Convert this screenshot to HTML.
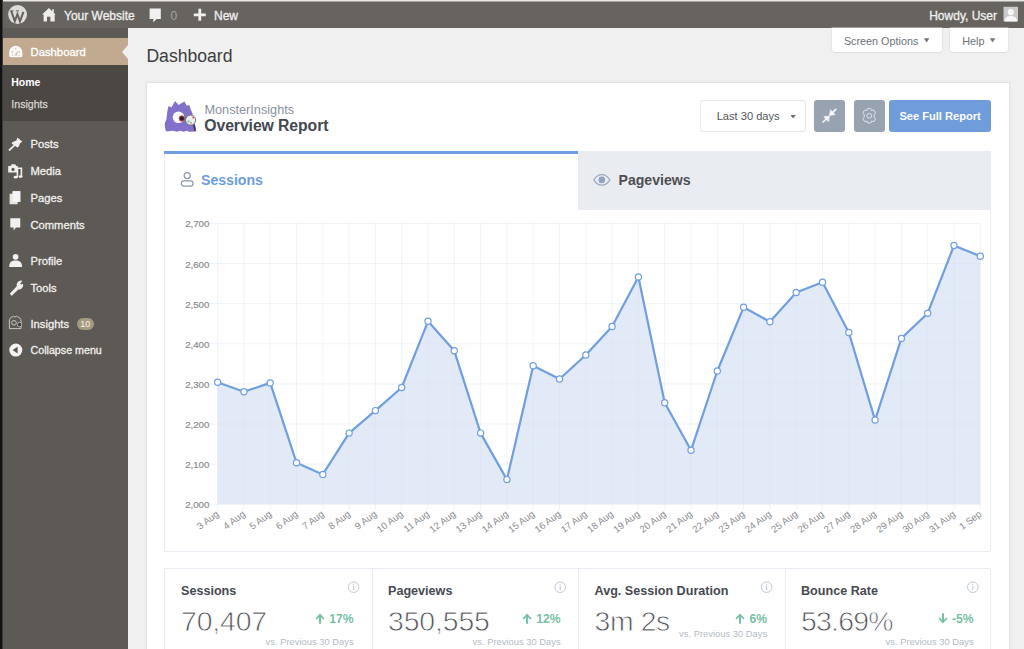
<!DOCTYPE html>
<html><head><meta charset="utf-8"><style>
html,body{margin:0;padding:0;width:1024px;height:649px;overflow:hidden;background:#f0f0f0;}
body{position:relative;font-family:"Liberation Sans", sans-serif;}
.r{position:absolute;}
.t{position:absolute;line-height:1;white-space:nowrap;}
svg{position:absolute;left:0;top:0;}
svg.ar{position:static;vertical-align:-1px;margin-right:4px;}
</style></head><body>
<div class="r" style="left:0px;top:0px;width:1024px;height:649px;background:#f0f0f0;"></div>
<div class="r" style="left:0px;top:0px;width:1024px;height:1px;background:#e9e7e5;"></div>
<div class="r" style="left:0px;top:1px;width:1024px;height:1px;background:#a9a5a1;"></div>
<div class="r" style="left:0px;top:2px;width:1024px;height:26px;background:#67635e;"></div>
<div class="r" style="left:3px;top:28px;width:125px;height:621px;background:#5d5954;"></div>
<div class="r" style="left:0px;top:0px;width:2px;height:649px;background:#121212;"></div>
<div class="r" style="left:2px;top:0px;width:1px;height:649px;background:#3c3a38;"></div>
<div class="r" style="left:3px;top:38px;width:125px;height:27px;background:#c2aa91;"></div>
<div class="r" style="left:3px;top:65px;width:125px;height:56px;background:#4b4743;"></div>
<div class="r" style="left:122px;top:44.6px;width:0;height:0;border-top:7px solid transparent;border-bottom:7px solid transparent;border-right:6px solid #f0f0f0;"></div>
<div class="t" style="left:64.00px;top:10.14px;font-size:12px;color:#f0f0f0;-webkit-text-stroke:0.3px #f0f0f0;">Your Website</div>
<div class="t" style="left:170.50px;top:10.14px;font-size:12px;color:#a9a49f;">0</div>
<div class="t" style="left:214.00px;top:10.14px;font-size:12px;color:#f0f0f0;-webkit-text-stroke:0.3px #f0f0f0;">New</div>
<div class="t" style="right:27.00px;top:9.54px;font-size:12px;color:#f0f0f0;text-align:right;-webkit-text-stroke:0.3px #f0f0f0;">Howdy, User</div>
<div class="t" style="left:30.50px;top:46.63px;font-size:11.3px;color:#fff;-webkit-text-stroke:0.3px #fff;">Dashboard</div>
<div class="t" style="left:11.20px;top:77.41px;font-size:10.5px;color:#fff;font-weight:700;">Home</div>
<div class="t" style="left:11.30px;top:98.93px;font-size:10.6px;color:#d6d3cf;-webkit-text-stroke:0.25px #d9d6d2;">Insights</div>
<div class="t" style="left:30.50px;top:139.12px;font-size:11.2px;color:#f2f0ee;-webkit-text-stroke:0.3px #f2f0ee;">Posts</div>
<div class="t" style="left:30.50px;top:166.22px;font-size:11.2px;color:#f2f0ee;-webkit-text-stroke:0.3px #f2f0ee;">Media</div>
<div class="t" style="left:30.50px;top:192.82px;font-size:11.2px;color:#f2f0ee;-webkit-text-stroke:0.3px #f2f0ee;">Pages</div>
<div class="t" style="left:30.50px;top:219.92px;font-size:11.2px;color:#f2f0ee;-webkit-text-stroke:0.3px #f2f0ee;">Comments</div>
<div class="t" style="left:30.50px;top:255.72px;font-size:11.2px;color:#f2f0ee;-webkit-text-stroke:0.3px #f2f0ee;">Profile</div>
<div class="t" style="left:30.50px;top:282.52px;font-size:11.2px;color:#f2f0ee;-webkit-text-stroke:0.3px #f2f0ee;">Tools</div>
<div class="t" style="left:30.50px;top:318.62px;font-size:11.2px;color:#f2f0ee;-webkit-text-stroke:0.3px #f2f0ee;">Insights</div>
<div class="t" style="left:30.50px;top:345.44px;font-size:10.7px;color:#f2f0ee;-webkit-text-stroke:0.3px #f2f0ee;">Collapse menu</div>
<div class="r" style="left:76.5px;top:317.5px;width:17.5px;height:12.5px;background:#a39b7e;border-radius:7px;"></div>
<div class="t" style="left:80.20px;top:320.18px;font-size:9px;color:#f4f2ea;">10</div>
<div class="t" style="left:146.40px;top:47.80px;font-size:17.6px;color:#3c3c3c;">Dashboard</div>
<div class="r" style="left:832px;top:28px;width:110px;height:23.5px;background:#fff;border-radius:0 0 3px 3px;box-shadow:0 0 0 0.5px #dcdcdc,0 1px 1px rgba(0,0,0,0.05);"></div>
<div class="r" style="left:949.5px;top:28px;width:58.5px;height:23.5px;background:#fff;border-radius:0 0 3px 3px;box-shadow:0 0 0 0.5px #dcdcdc,0 1px 1px rgba(0,0,0,0.05);"></div>
<div class="t" style="left:843.90px;top:36.16px;font-size:10.8px;color:#6e7378;">Screen Options</div>
<div class="t" style="left:962.30px;top:36.16px;font-size:10.8px;color:#6e7378;">Help</div>
<div class="r" style="left:146.5px;top:82.8px;width:862px;height:600px;background:#fff;box-shadow:0 0 0 1px #e1e3e7,0 0 2px 1px rgba(200,205,215,0.35);"></div>
<div class="t" style="left:204.50px;top:104.05px;font-size:12.7px;color:#88919e;">MonsterInsights</div>
<div class="t" style="left:204.30px;top:118.03px;font-size:15.8px;color:#434851;font-weight:700;letter-spacing:-0.1px;">Overview Report</div>
<div class="r" style="left:700.3px;top:100.2px;width:106.2px;height:32.3px;background:#fff;box-sizing:border-box;border:1px solid #e4e7eb;border-radius:3px;"></div>
<div class="t" style="left:716.70px;top:111.30px;font-size:11.1px;color:#50545a;">Last 30 days</div>
<div class="r" style="left:813.7px;top:99.8px;width:31.6px;height:32px;background:#98a3b2;border-radius:3px;"></div>
<div class="r" style="left:853.6px;top:99.8px;width:31.2px;height:32px;background:#98a3b2;border-radius:3px;"></div>
<div class="r" style="left:889.4px;top:99.8px;width:101.5px;height:32px;background:#6f9ddc;border-radius:3px;"></div>
<div class="t" style="left:899.40px;top:111.40px;font-size:11.1px;color:#fff;font-weight:700;">See Full Report</div>
<div class="r" style="left:164px;top:151px;width:827px;height:401px;background:#fff;box-sizing:border-box;border:1px solid #e8edf3;"></div>
<div class="r" style="left:577.7px;top:151.5px;width:413px;height:58.3px;background:#e9ecf0;"></div>
<div class="r" style="left:164px;top:151px;width:413.7px;height:2.6px;background:#6f9ddf;"></div>
<div class="t" style="left:201.00px;top:172.86px;font-size:14.1px;color:#6b9ddf;font-weight:700;">Sessions</div>
<div class="t" style="left:618.50px;top:173.26px;font-size:14.1px;color:#4e4f54;font-weight:700;">Pageviews</div>
<div class="r" style="left:164px;top:568px;width:827px;height:100px;background:#fff;box-sizing:border-box;border:1px solid #e8edf3;"></div>
<div class="r" style="left:371.6px;top:568px;width:1px;height:90px;background:#e8edf3;"></div>
<div class="r" style="left:578.2px;top:568px;width:1px;height:90px;background:#e8edf3;"></div>
<div class="r" style="left:784.7px;top:568px;width:1px;height:90px;background:#e8edf3;"></div>
<div class="t" style="left:181.00px;top:585.33px;font-size:12.6px;color:#464a51;font-weight:700;">Sessions</div>
<div class="t" style="left:181.00px;top:606.56px;font-size:28.4px;color:#4d5055;letter-spacing:-0.14px;-webkit-text-stroke:0.8px #fff;">70,407</div>
<div class="t" style="right:670.40px;top:613.47px;font-size:12.2px;color:#79c1a3;text-align:right;font-weight:700;"><svg class="ar" width="10" height="11" viewBox="0 0 10 11"><path d="M0.4,5.4 L5,0.6 L9.6,5.4 L8.3,6.6 L6,4.3 L6,10.8 L4,10.8 L4,4.3 L1.7,6.6 Z" fill="#79c1a3"/></svg>17%</div>
<div class="t" style="right:670.40px;top:637.24px;font-size:9.4px;color:#b3bbc5;text-align:right;">vs. Previous 30 Days</div>
<div class="t" style="left:388.00px;top:585.33px;font-size:12.6px;color:#464a51;font-weight:700;">Pageviews</div>
<div class="t" style="left:388.00px;top:606.56px;font-size:28.4px;color:#4d5055;letter-spacing:-0.12px;-webkit-text-stroke:0.8px #fff;">350,555</div>
<div class="t" style="right:463.40px;top:613.47px;font-size:12.2px;color:#79c1a3;text-align:right;font-weight:700;"><svg class="ar" width="10" height="11" viewBox="0 0 10 11"><path d="M0.4,5.4 L5,0.6 L9.6,5.4 L8.3,6.6 L6,4.3 L6,10.8 L4,10.8 L4,4.3 L1.7,6.6 Z" fill="#79c1a3"/></svg>12%</div>
<div class="t" style="right:463.40px;top:637.24px;font-size:9.4px;color:#b3bbc5;text-align:right;">vs. Previous 30 Days</div>
<div class="t" style="left:594.50px;top:585.33px;font-size:12.6px;color:#464a51;font-weight:700;">Avg. Session Duration</div>
<div class="t" style="left:594.50px;top:606.56px;font-size:28.4px;color:#4d5055;letter-spacing:-0.39px;-webkit-text-stroke:0.8px #fff;">3m 2s</div>
<div class="t" style="right:256.90px;top:613.47px;font-size:12.2px;color:#79c1a3;text-align:right;font-weight:700;"><svg class="ar" width="10" height="11" viewBox="0 0 10 11"><path d="M0.4,5.4 L5,0.6 L9.6,5.4 L8.3,6.6 L6,4.3 L6,10.8 L4,10.8 L4,4.3 L1.7,6.6 Z" fill="#79c1a3"/></svg>6%</div>
<div class="t" style="right:256.90px;top:629.04px;font-size:9.4px;color:#b3bbc5;text-align:right;">vs. Previous 30 Days</div>
<div class="t" style="left:801.00px;top:585.33px;font-size:12.6px;color:#464a51;font-weight:700;">Bounce Rate</div>
<div class="t" style="left:801.00px;top:606.56px;font-size:28.4px;color:#4d5055;letter-spacing:-0.75px;-webkit-text-stroke:0.8px #fff;">53.69%</div>
<div class="t" style="right:50.40px;top:613.47px;font-size:12.2px;color:#79c1a3;text-align:right;font-weight:700;"><svg class="ar" width="10" height="11" viewBox="0 0 10 11"><path d="M0.4,5.6 L5,10.4 L9.6,5.6 L8.3,4.4 L6,6.7 L6,0.2 L4,0.2 L4,6.7 L1.7,4.4 Z" fill="#79c1a3"/></svg>-5%</div>
<div class="t" style="right:50.40px;top:637.24px;font-size:9.4px;color:#b3bbc5;text-align:right;">vs. Previous 30 Days</div>
<svg width="1024" height="649" viewBox="0 0 1024 649" style="font-family:'Liberation Sans', sans-serif">
<polygon points="217.6,504.2 217.6,382.3 243.9,391.8 270.2,382.9 296.5,462.7 322.8,474.4 349.1,433.1 375.4,410.6 401.7,387.5 428.0,321.3 454.3,350.8 480.6,433.1 506.9,479.6 533.2,365.8 559.5,379.0 585.8,355.0 612.1,326.5 638.4,276.9 664.7,402.7 691.0,450.3 717.3,371.0 743.6,307.3 769.9,321.7 796.2,292.5 822.5,282.2 848.8,332.5 875.1,420.1 901.4,338.4 927.7,313.2 954.0,245.5 980.3,256.3 980.3,504.2" fill="#e2e9f7"/>
<line x1="209" y1="504.2" x2="980.3" y2="504.2" stroke="#d9e0ea" stroke-opacity="0.4" stroke-width="1"/>
<line x1="209" y1="464.1" x2="980.3" y2="464.1" stroke="#d9e0ea" stroke-opacity="0.4" stroke-width="1"/>
<line x1="209" y1="424.0" x2="980.3" y2="424.0" stroke="#d9e0ea" stroke-opacity="0.4" stroke-width="1"/>
<line x1="209" y1="383.9" x2="980.3" y2="383.9" stroke="#d9e0ea" stroke-opacity="0.4" stroke-width="1"/>
<line x1="209" y1="343.8" x2="980.3" y2="343.8" stroke="#d9e0ea" stroke-opacity="0.4" stroke-width="1"/>
<line x1="209" y1="303.7" x2="980.3" y2="303.7" stroke="#d9e0ea" stroke-opacity="0.4" stroke-width="1"/>
<line x1="209" y1="263.6" x2="980.3" y2="263.6" stroke="#d9e0ea" stroke-opacity="0.4" stroke-width="1"/>
<line x1="209" y1="223.5" x2="980.3" y2="223.5" stroke="#d9e0ea" stroke-opacity="0.4" stroke-width="1"/>
<line x1="217.6" y1="223.5" x2="217.6" y2="510.2" stroke="#d9e0ea" stroke-opacity="0.4" stroke-width="1"/>
<line x1="243.9" y1="223.5" x2="243.9" y2="510.2" stroke="#d9e0ea" stroke-opacity="0.4" stroke-width="1"/>
<line x1="270.2" y1="223.5" x2="270.2" y2="510.2" stroke="#d9e0ea" stroke-opacity="0.4" stroke-width="1"/>
<line x1="296.5" y1="223.5" x2="296.5" y2="510.2" stroke="#d9e0ea" stroke-opacity="0.4" stroke-width="1"/>
<line x1="322.8" y1="223.5" x2="322.8" y2="510.2" stroke="#d9e0ea" stroke-opacity="0.4" stroke-width="1"/>
<line x1="349.1" y1="223.5" x2="349.1" y2="510.2" stroke="#d9e0ea" stroke-opacity="0.4" stroke-width="1"/>
<line x1="375.4" y1="223.5" x2="375.4" y2="510.2" stroke="#d9e0ea" stroke-opacity="0.4" stroke-width="1"/>
<line x1="401.7" y1="223.5" x2="401.7" y2="510.2" stroke="#d9e0ea" stroke-opacity="0.4" stroke-width="1"/>
<line x1="428.0" y1="223.5" x2="428.0" y2="510.2" stroke="#d9e0ea" stroke-opacity="0.4" stroke-width="1"/>
<line x1="454.3" y1="223.5" x2="454.3" y2="510.2" stroke="#d9e0ea" stroke-opacity="0.4" stroke-width="1"/>
<line x1="480.6" y1="223.5" x2="480.6" y2="510.2" stroke="#d9e0ea" stroke-opacity="0.4" stroke-width="1"/>
<line x1="506.9" y1="223.5" x2="506.9" y2="510.2" stroke="#d9e0ea" stroke-opacity="0.4" stroke-width="1"/>
<line x1="533.2" y1="223.5" x2="533.2" y2="510.2" stroke="#d9e0ea" stroke-opacity="0.4" stroke-width="1"/>
<line x1="559.5" y1="223.5" x2="559.5" y2="510.2" stroke="#d9e0ea" stroke-opacity="0.4" stroke-width="1"/>
<line x1="585.8" y1="223.5" x2="585.8" y2="510.2" stroke="#d9e0ea" stroke-opacity="0.4" stroke-width="1"/>
<line x1="612.1" y1="223.5" x2="612.1" y2="510.2" stroke="#d9e0ea" stroke-opacity="0.4" stroke-width="1"/>
<line x1="638.4" y1="223.5" x2="638.4" y2="510.2" stroke="#d9e0ea" stroke-opacity="0.4" stroke-width="1"/>
<line x1="664.7" y1="223.5" x2="664.7" y2="510.2" stroke="#d9e0ea" stroke-opacity="0.4" stroke-width="1"/>
<line x1="691.0" y1="223.5" x2="691.0" y2="510.2" stroke="#d9e0ea" stroke-opacity="0.4" stroke-width="1"/>
<line x1="717.3" y1="223.5" x2="717.3" y2="510.2" stroke="#d9e0ea" stroke-opacity="0.4" stroke-width="1"/>
<line x1="743.6" y1="223.5" x2="743.6" y2="510.2" stroke="#d9e0ea" stroke-opacity="0.4" stroke-width="1"/>
<line x1="769.9" y1="223.5" x2="769.9" y2="510.2" stroke="#d9e0ea" stroke-opacity="0.4" stroke-width="1"/>
<line x1="796.2" y1="223.5" x2="796.2" y2="510.2" stroke="#d9e0ea" stroke-opacity="0.4" stroke-width="1"/>
<line x1="822.5" y1="223.5" x2="822.5" y2="510.2" stroke="#d9e0ea" stroke-opacity="0.4" stroke-width="1"/>
<line x1="848.8" y1="223.5" x2="848.8" y2="510.2" stroke="#d9e0ea" stroke-opacity="0.4" stroke-width="1"/>
<line x1="875.1" y1="223.5" x2="875.1" y2="510.2" stroke="#d9e0ea" stroke-opacity="0.4" stroke-width="1"/>
<line x1="901.4" y1="223.5" x2="901.4" y2="510.2" stroke="#d9e0ea" stroke-opacity="0.4" stroke-width="1"/>
<line x1="927.7" y1="223.5" x2="927.7" y2="510.2" stroke="#d9e0ea" stroke-opacity="0.4" stroke-width="1"/>
<line x1="954.0" y1="223.5" x2="954.0" y2="510.2" stroke="#d9e0ea" stroke-opacity="0.4" stroke-width="1"/>
<line x1="980.3" y1="223.5" x2="980.3" y2="510.2" stroke="#d9e0ea" stroke-opacity="0.4" stroke-width="1"/>
<polyline points="217.6,382.3 243.9,391.8 270.2,382.9 296.5,462.7 322.8,474.4 349.1,433.1 375.4,410.6 401.7,387.5 428.0,321.3 454.3,350.8 480.6,433.1 506.9,479.6 533.2,365.8 559.5,379.0 585.8,355.0 612.1,326.5 638.4,276.9 664.7,402.7 691.0,450.3 717.3,371.0 743.6,307.3 769.9,321.7 796.2,292.5 822.5,282.2 848.8,332.5 875.1,420.1 901.4,338.4 927.7,313.2 954.0,245.5 980.3,256.3" fill="none" stroke="#6e9fdf" stroke-width="2.2" stroke-linejoin="round"/>
<circle cx="217.6" cy="382.3" r="3.1" fill="#fff" stroke="#70a0df" stroke-width="1.2"/>
<circle cx="243.9" cy="391.8" r="3.1" fill="#fff" stroke="#70a0df" stroke-width="1.2"/>
<circle cx="270.2" cy="382.9" r="3.1" fill="#fff" stroke="#70a0df" stroke-width="1.2"/>
<circle cx="296.5" cy="462.7" r="3.1" fill="#fff" stroke="#70a0df" stroke-width="1.2"/>
<circle cx="322.8" cy="474.4" r="3.1" fill="#fff" stroke="#70a0df" stroke-width="1.2"/>
<circle cx="349.1" cy="433.1" r="3.1" fill="#fff" stroke="#70a0df" stroke-width="1.2"/>
<circle cx="375.4" cy="410.6" r="3.1" fill="#fff" stroke="#70a0df" stroke-width="1.2"/>
<circle cx="401.7" cy="387.5" r="3.1" fill="#fff" stroke="#70a0df" stroke-width="1.2"/>
<circle cx="428.0" cy="321.3" r="3.1" fill="#fff" stroke="#70a0df" stroke-width="1.2"/>
<circle cx="454.3" cy="350.8" r="3.1" fill="#fff" stroke="#70a0df" stroke-width="1.2"/>
<circle cx="480.6" cy="433.1" r="3.1" fill="#fff" stroke="#70a0df" stroke-width="1.2"/>
<circle cx="506.9" cy="479.6" r="3.1" fill="#fff" stroke="#70a0df" stroke-width="1.2"/>
<circle cx="533.2" cy="365.8" r="3.1" fill="#fff" stroke="#70a0df" stroke-width="1.2"/>
<circle cx="559.5" cy="379.0" r="3.1" fill="#fff" stroke="#70a0df" stroke-width="1.2"/>
<circle cx="585.8" cy="355.0" r="3.1" fill="#fff" stroke="#70a0df" stroke-width="1.2"/>
<circle cx="612.1" cy="326.5" r="3.1" fill="#fff" stroke="#70a0df" stroke-width="1.2"/>
<circle cx="638.4" cy="276.9" r="3.1" fill="#fff" stroke="#70a0df" stroke-width="1.2"/>
<circle cx="664.7" cy="402.7" r="3.1" fill="#fff" stroke="#70a0df" stroke-width="1.2"/>
<circle cx="691.0" cy="450.3" r="3.1" fill="#fff" stroke="#70a0df" stroke-width="1.2"/>
<circle cx="717.3" cy="371.0" r="3.1" fill="#fff" stroke="#70a0df" stroke-width="1.2"/>
<circle cx="743.6" cy="307.3" r="3.1" fill="#fff" stroke="#70a0df" stroke-width="1.2"/>
<circle cx="769.9" cy="321.7" r="3.1" fill="#fff" stroke="#70a0df" stroke-width="1.2"/>
<circle cx="796.2" cy="292.5" r="3.1" fill="#fff" stroke="#70a0df" stroke-width="1.2"/>
<circle cx="822.5" cy="282.2" r="3.1" fill="#fff" stroke="#70a0df" stroke-width="1.2"/>
<circle cx="848.8" cy="332.5" r="3.1" fill="#fff" stroke="#70a0df" stroke-width="1.2"/>
<circle cx="875.1" cy="420.1" r="3.1" fill="#fff" stroke="#70a0df" stroke-width="1.2"/>
<circle cx="901.4" cy="338.4" r="3.1" fill="#fff" stroke="#70a0df" stroke-width="1.2"/>
<circle cx="927.7" cy="313.2" r="3.1" fill="#fff" stroke="#70a0df" stroke-width="1.2"/>
<circle cx="954.0" cy="245.5" r="3.1" fill="#fff" stroke="#70a0df" stroke-width="1.2"/>
<circle cx="980.3" cy="256.3" r="3.1" fill="#fff" stroke="#70a0df" stroke-width="1.2"/>
<g font-size="9.7" fill="#8b8d91" stroke="#8b8d91" stroke-width="0.2">
<text x="209.4" y="508.1" text-anchor="end">2,000</text>
<text x="209.4" y="468.0" text-anchor="end">2,100</text>
<text x="209.4" y="427.9" text-anchor="end">2,200</text>
<text x="209.4" y="387.8" text-anchor="end">2,300</text>
<text x="209.4" y="347.7" text-anchor="end">2,400</text>
<text x="209.4" y="307.6" text-anchor="end">2,500</text>
<text x="209.4" y="267.5" text-anchor="end">2,600</text>
<text x="209.4" y="227.4" text-anchor="end">2,700</text>
</g>
<g font-size="9.6" fill="#8a8c90">
<text transform="translate(219.6,515.2) rotate(-37)" text-anchor="end">3 Aug</text>
<text transform="translate(245.9,515.2) rotate(-37)" text-anchor="end">4 Aug</text>
<text transform="translate(272.2,515.2) rotate(-37)" text-anchor="end">5 Aug</text>
<text transform="translate(298.5,515.2) rotate(-37)" text-anchor="end">6 Aug</text>
<text transform="translate(324.8,515.2) rotate(-37)" text-anchor="end">7 Aug</text>
<text transform="translate(351.1,515.2) rotate(-37)" text-anchor="end">8 Aug</text>
<text transform="translate(377.4,515.2) rotate(-37)" text-anchor="end">9 Aug</text>
<text transform="translate(403.7,515.2) rotate(-37)" text-anchor="end">10 Aug</text>
<text transform="translate(430.0,515.2) rotate(-37)" text-anchor="end">11 Aug</text>
<text transform="translate(456.3,515.2) rotate(-37)" text-anchor="end">12 Aug</text>
<text transform="translate(482.6,515.2) rotate(-37)" text-anchor="end">13 Aug</text>
<text transform="translate(508.9,515.2) rotate(-37)" text-anchor="end">14 Aug</text>
<text transform="translate(535.2,515.2) rotate(-37)" text-anchor="end">15 Aug</text>
<text transform="translate(561.5,515.2) rotate(-37)" text-anchor="end">16 Aug</text>
<text transform="translate(587.8,515.2) rotate(-37)" text-anchor="end">17 Aug</text>
<text transform="translate(614.1,515.2) rotate(-37)" text-anchor="end">18 Aug</text>
<text transform="translate(640.4,515.2) rotate(-37)" text-anchor="end">19 Aug</text>
<text transform="translate(666.7,515.2) rotate(-37)" text-anchor="end">20 Aug</text>
<text transform="translate(693.0,515.2) rotate(-37)" text-anchor="end">21 Aug</text>
<text transform="translate(719.3,515.2) rotate(-37)" text-anchor="end">22 Aug</text>
<text transform="translate(745.6,515.2) rotate(-37)" text-anchor="end">23 Aug</text>
<text transform="translate(771.9,515.2) rotate(-37)" text-anchor="end">24 Aug</text>
<text transform="translate(798.2,515.2) rotate(-37)" text-anchor="end">25 Aug</text>
<text transform="translate(824.5,515.2) rotate(-37)" text-anchor="end">26 Aug</text>
<text transform="translate(850.8,515.2) rotate(-37)" text-anchor="end">27 Aug</text>
<text transform="translate(877.1,515.2) rotate(-37)" text-anchor="end">28 Aug</text>
<text transform="translate(903.4,515.2) rotate(-37)" text-anchor="end">29 Aug</text>
<text transform="translate(929.7,515.2) rotate(-37)" text-anchor="end">30 Aug</text>
<text transform="translate(956.0,515.2) rotate(-37)" text-anchor="end">31 Aug</text>
<text transform="translate(982.3,515.2) rotate(-37)" text-anchor="end">1 Sep</text>
</g>
<!-- WP logo -->
<g transform="translate(17.6,14.5)">
<circle r="9.4" fill="#dedcda"/>
<path d="M-6.4,-3.6 L-2.8,6.8 L-0.2,-0.4 L2.4,6.8 L5.8,-2.6" fill="none" stroke="#66615c" stroke-width="2" stroke-linejoin="miter"/>
<path d="M-7.6,-3.6 H-4 M-1.8,-3.6 H1.4" stroke="#66615c" stroke-width="1"/>
</g>
<!-- home -->
<path d="M48.9,7.9 L42.1,14.6 L43.6,14.6 L43.6,21.6 L47,21.6 L47,16.8 L50.4,16.8 L50.4,21.6 L54.7,21.6 L54.7,14.6 L55.6,14.6 L53.8,12.8 L53.8,9.2 L52.2,9.2 L52.2,11.2 Z" fill="#eeedec"/>
<!-- comment bubble -->
<path d="M149.6,8.4 H160.8 V19 H156.6 L153.2,22.2 L153.4,19 H149.6 Z" fill="#f2f1f0"/>
<!-- plus -->
<path d="M199.8,8.8 V20.8 M193.8,14.8 H205.8" stroke="#f2f1f0" stroke-width="2.8"/>
<!-- avatar -->
<rect x="1003.5" y="6.8" width="14.5" height="14.6" fill="#cacaca"/>
<circle cx="1010.8" cy="12.2" r="3.1" fill="#f6f6f6"/>
<path d="M1004.6,21.4 C1004.9,17.2 1007.6,16 1010.8,16 C1014,16 1016.7,17.2 1017,21.4 Z" fill="#f6f6f6"/>
<!-- dashboard gauge -->
<path d="M9.2,56.6 Q9,54 9.2,52.4 A6.55,6.55 0 0 1 22.3,52.4 Q22.5,54 22.3,56.6 Q21.5,57.2 19,57.2 L12.5,57.2 Q10,57.2 9.2,56.6 Z" fill="#fbf9f6"/>
<g fill="#d9c9b8"><circle cx="12.3" cy="52" r="0.9"/><circle cx="15.7" cy="48.6" r="0.9"/><circle cx="19.2" cy="52" r="0.9"/><circle cx="12.6" cy="55.2" r="0.8"/><circle cx="18.9" cy="55.2" r="0.8"/></g>
<path d="M14.6,55.2 L18.2,50.2 L16.6,55.8 Z" fill="#cbb49c"/>
<!-- posts pin -->
<g fill="#f0efed">
<path d="M17.4,137.4 L22.4,141.8 L20.2,143 L18.6,146.8 L17.4,147.6 L11.6,143.4 L12.6,142 L16.4,140.4 Z"/>
</g>
<path d="M14.2,145.6 L9.4,150" stroke="#f0efed" stroke-width="1.7" stroke-linecap="round"/>
<!-- media -->
<g fill="#f0efed">
<path d="M8.2,166 H10.6 L11.8,164.2 H15.2 L16.2,166 H17.8 V172.6 H8.2 Z"/>
<circle cx="13" cy="169.4" r="1.6" fill="#5d5954"/>
<path d="M16.6,167.4 H22.2 V177 H20.6 V169 H18.2 V177.5 H16.6 Z" />
<ellipse cx="15.6" cy="177.2" rx="1.9" ry="1.4"/>
<ellipse cx="20.6" cy="176.6" rx="1.9" ry="1.4"/>
</g>
<!-- pages -->
<path d="M9.6,193.8 H12.6 V191.2 H20.3 V201.8 H17.6 V204.2 H9.6 Z" fill="#e8e6e3"/>
<path d="M12.6,191.2 H20.3 V201.8 H12.6 Z" fill="#f6f5f3"/>
<!-- comments -->
<path d="M10.3,218.2 H20.3 V227.5 H16 L13.6,230.4 L13.6,227.5 H10.3 Z" fill="#f2f1ef"/>
<!-- profile -->
<circle cx="15.6" cy="256.8" r="2.9" fill="#f2f1ef"/>
<path d="M9.2,267 C9.2,262 11.8,260.6 15.6,260.6 C19.4,260.6 22.1,262 22.1,267 Z" fill="#f2f1ef"/>
<!-- tools wrench -->
<path d="M10.6,293.6 L17.4,286.4 C16.6,283.6 18.6,281 21.4,281.2 L19.6,283.4 L20.6,285.2 L22.6,284.6 C22.8,287.8 20.4,289.4 18.2,288.8 L11.6,295 Z" fill="#f0efed" stroke="#f0efed" stroke-width="1.2" stroke-linejoin="round"/>
<!-- insights monster outline -->
<g fill="none" stroke="#c9c5c0" stroke-width="1">
<path d="M9.4,328.6 V321 C9.4,318.6 10.6,317.2 12.2,317 L13.4,316.2 L14.8,317 L16.4,316.2 L17.8,317 C19.8,317.4 21,318.8 21,321 V328.6 Z"/>
<circle cx="14" cy="322.8" r="2.3"/>
</g>
<circle cx="19.6" cy="324.6" r="2.2" fill="#3e3a36" stroke="#c9c5c0" stroke-width="0.8"/>
<!-- collapse -->
<circle cx="15.8" cy="350.1" r="6.5" fill="#f4f3f1"/>
<path d="M12.6,350.1 L17.6,346.8 V353.4 Z" fill="#5d5954"/>

<!-- monster logo -->
<path d="M166,131.6 L165,127.4 C164.4,124.4 164.9,121.4 166.4,119.4 L167.2,112.6 L168.4,106 L171.4,107.6 L175.1,101 L178.6,105 L184.4,101.6 L186.8,105.8 L189.4,105 L190.8,109.8 L192.6,113.6 L192.8,121 L195.4,125.6 L196.4,131.4 L189,131.8 L186.8,130.8 L183.6,131.8 L180.4,130.8 L176.8,131.8 L172.8,130.8 Z" fill="#8370cb"/>
<circle cx="178.5" cy="117.3" r="5.8" fill="#fff"/>
<circle cx="181.8" cy="118.5" r="2.7" fill="#2a2628" stroke="#d5504a" stroke-width="0.9"/>
<circle cx="190.6" cy="120.1" r="5.1" fill="#e9f0f3" stroke="#707078" stroke-width="1"/>
<path d="M187.6,122.2 L189.6,120.6" stroke="#80c9a4" stroke-width="1.8"/>
<circle cx="191" cy="122.8" r="1.1" fill="#dba36a"/>
<circle cx="193.2" cy="117.6" r="1" fill="#e05a5a"/>
<path d="M193.8,124.6 L195,130.6" stroke="#3a3a3e" stroke-width="1.6"/>
<!-- select caret -->
<path d="M790.5,114.9 H795.8 L793.15,118.4 Z" fill="#6b6e73"/>
<!-- screen options caret, help caret -->
<path d="M923.9,38.2 H929.3 L926.6,42.6 Z" fill="#72777c"/>
<path d="M989.8,38.2 H995.3 L992.55,42.6 Z" fill="#72777c"/>
<!-- compress icon -->
<g stroke="#fbfbfc" stroke-width="1.6" fill="#fbfbfc" stroke-linecap="round">
<path d="M823.2,122 L827.6,117.6" />
<path d="M831.4,113.6 L835.8,109.4" />
<path d="M829.2,116 L823.8,116.8 L828.4,121.4 Z" stroke-width="0.6" stroke-linejoin="round"/>
<path d="M829.8,115.4 L835.2,114.6 L830.6,110 Z" stroke-width="0.6" stroke-linejoin="round"/>
</g>
<!-- gear -->
<g transform="translate(869.2,115.8)" fill="none" stroke="#dfe3e9" stroke-width="1">
<path d="M-1.6,-7.2 L1.6,-7.2 L2.4,-5.2 L4.6,-5.8 L6.4,-3 L5,-1.4 L5,1.4 L6.4,3 L4.6,5.8 L2.4,5.2 L1.6,7.2 L-1.6,7.2 L-2.4,5.2 L-4.6,5.8 L-6.4,3 L-5,1.4 L-5,-1.4 L-6.4,-3 L-4.6,-5.8 L-2.4,-5.2 Z" stroke-linejoin="round"/>
<circle r="2.4"/>
</g>
<!-- sessions person icon -->
<g fill="none" stroke="#8d97a5" stroke-width="1.2">
<circle cx="187.2" cy="175.6" r="3"/>
<rect x="181.4" y="180.8" width="11.6" height="5.4" rx="2.4"/>
</g>
<!-- eye icon -->
<path d="M593.8,179.9 C596.4,175.6 599.4,174.6 601.8,174.6 C604.2,174.6 607.2,175.6 609.9,179.9 C607.2,184.2 604.2,185.2 601.8,185.2 C599.4,185.2 596.4,184.2 593.8,179.9 Z" fill="none" stroke="#9aaac0" stroke-width="1.2"/>
<circle cx="601.8" cy="179.9" r="3.3" fill="#8fa5c0"/>

<!-- stats info icons -->
<g fill="none" stroke="#b9c3ce" stroke-width="0.9">
<circle cx="353.6" cy="587.2" r="5.3"/>
<circle cx="560.2" cy="587.2" r="5.3"/>
<circle cx="766.6" cy="587.2" r="5.3"/>
<circle cx="972.8" cy="587.2" r="5.3"/>
</g>
<g stroke="#b9c3ce" stroke-width="1">
<path d="M353.6,586 V590.2 M560.2,586 V590.2 M766.6,586 V590.2 M972.8,586 V590.2"/>
</g>
<g fill="#b9c3ce">
<circle cx="353.6" cy="584.2" r="0.6"/><circle cx="560.2" cy="584.2" r="0.6"/><circle cx="766.6" cy="584.2" r="0.6"/><circle cx="972.8" cy="584.2" r="0.6"/>
</g>

</svg>
</body></html>
